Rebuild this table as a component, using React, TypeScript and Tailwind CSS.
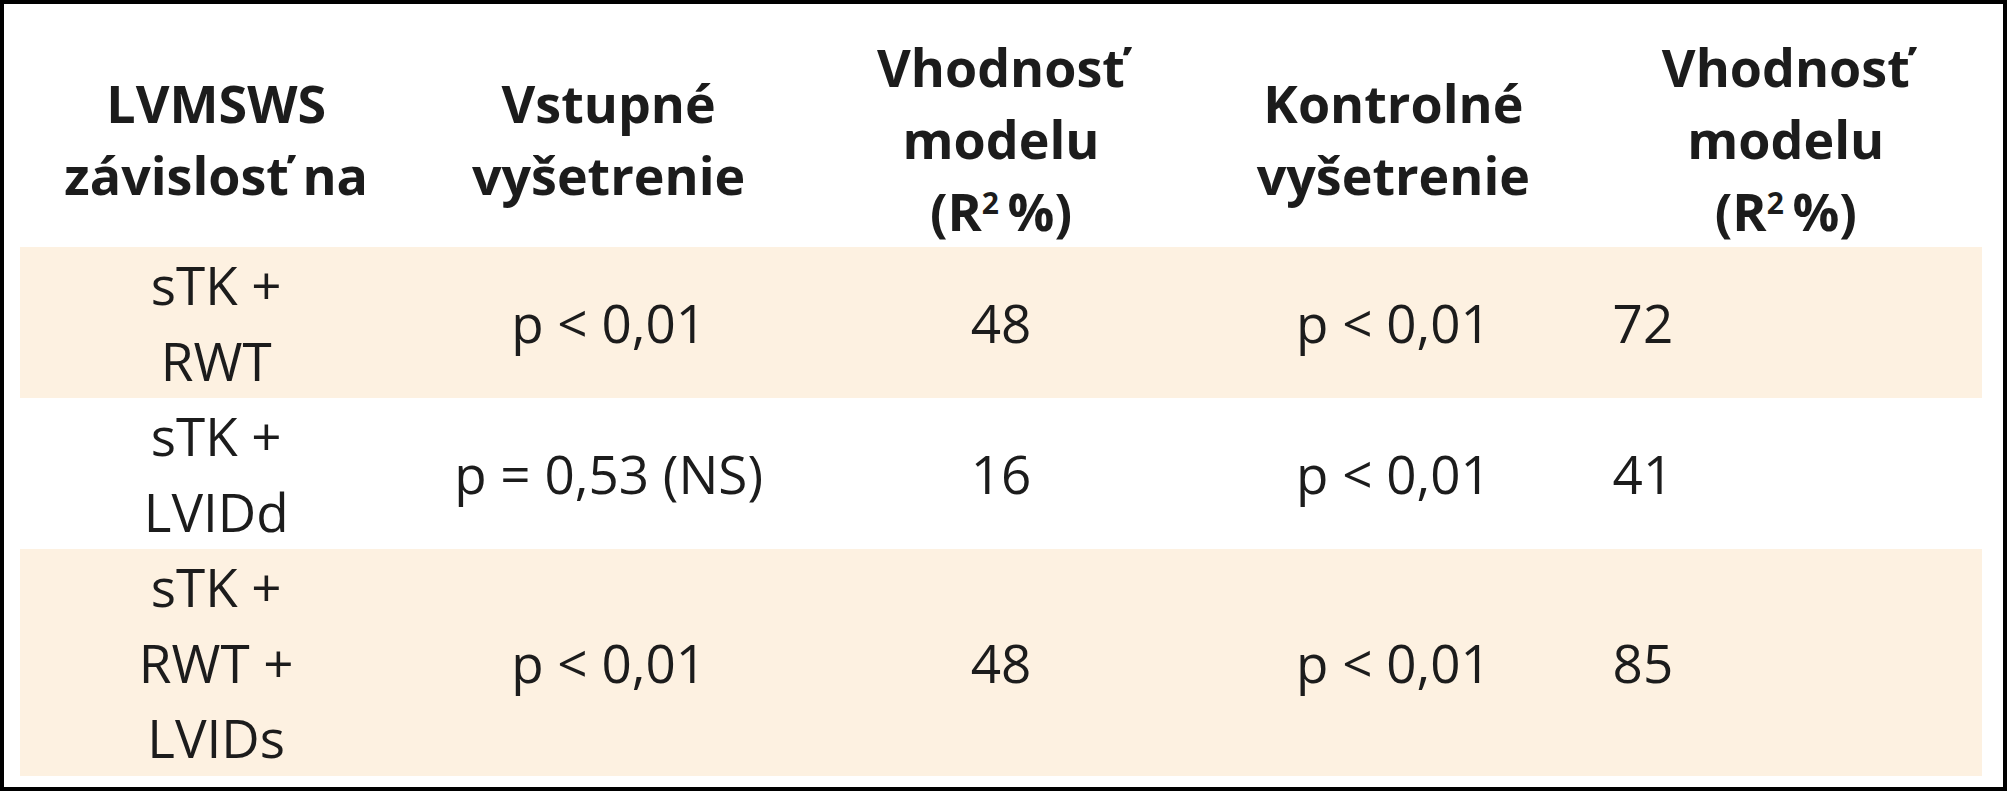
import React from "react";

type Row = {
  label: string[];
  vstup: string;
  fit1: string;
  kontrol: string;
  fit2: string;
  shaded: boolean;
};

const rows: Row[] = [
  { label: ["sTK +", "RWT"], vstup: "p < 0,01", fit1: "48", kontrol: "p < 0,01", fit2: "72", shaded: true },
  { label: ["sTK +", "LVIDd"], vstup: "p = 0,53 (NS)", fit1: "16", kontrol: "p < 0,01", fit2: "41", shaded: false },
  { label: ["sTK +", "RWT +", "LVIDs"], vstup: "p < 0,01", fit1: "48", kontrol: "p < 0,01", fit2: "85", shaded: true },
];

function FitHeader() {
  return (
    <div>
      <div>Vhodnosť</div>
      <div>modelu</div>
      <div>
        (R<span className="relative -top-[17px] align-baseline text-[30px] leading-none">2</span>&#8201;%)
      </div>
    </div>
  );
}

export default function App() {
  return (
    <div className="min-h-screen bg-white font-['Open_Sans',sans-serif] text-[#1c1c1c]">
      <div className="w-[2007px] h-[791px] border-[4px] border-black bg-white pl-[16px] pr-[21px] pb-[11px]">
        <div className="grid grid-cols-5 h-[243px] pt-[26px] items-center text-center text-[52px] leading-[72px] font-bold">
          <div>
            <div>LVMSWS</div>
            <div>závislosť na</div>
          </div>
          <div>
            <div>Vstupné</div>
            <div>vyšetrenie</div>
          </div>
          <FitHeader />
          <div>
            <div>Kontrolné</div>
            <div>vyšetrenie</div>
          </div>
          <FitHeader />
        </div>

        {rows.map((r, i) => (
          <div
            key={i}
            className={`grid grid-cols-5 items-center text-[53px] leading-[75.5px] ${r.shaded ? "bg-[#fdf1e1]" : "bg-white"}`}
          >
            <div className="text-center">
              {r.label.map((l) => (
                <div key={l}>{l}</div>
              ))}
            </div>
            <div className="text-center">{r.vstup}</div>
            <div className="text-center">{r.fit1}</div>
            <div className="text-center">{r.kontrol}</div>
            <div className="pl-[23px]">{r.fit2}</div>
          </div>
        ))}
      </div>
    </div>
  );
}
